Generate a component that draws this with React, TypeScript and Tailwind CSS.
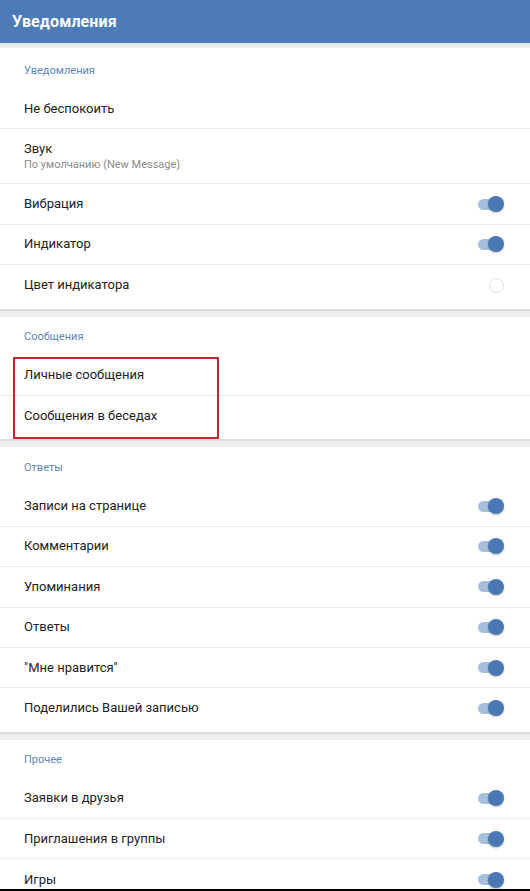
import React from "react";

type Row = { title: string; sub?: string; control?: "toggle" | "radio" | "none" };

const Toggle = () => (
  <div className="relative w-[26px] h-[16px] flex items-center">
    <div className="w-[22px] h-[11px] rounded-full bg-[#a7bedd]" />
    <div className="absolute right-0 top-0 w-[16px] h-[16px] rounded-full bg-[#4a78b5] shadow-[0_1px_2px_rgba(0,0,0,0.25)]" />
  </div>
);

const Radio = () => (
  <div className="w-[15px] h-[15px] rounded-full border border-[#dcdcdc] bg-white" />
);

const SettingRow = ({ row, last }: { row: Row; last: boolean }) => (
  <div
    className={`flex items-center justify-between pl-6 pr-[26px] ${row.sub ? "h-[55px]" : "h-[40.4px]"} ${last ? "" : "border-b border-[#ebebeb]"}`}
  >
    <div className="flex flex-col">
      <span className="text-[13px] leading-[16px] text-[#222]">{row.title}</span>
      {row.sub && <span className="text-[11px] leading-[14px] text-[#8a8a8a] mt-[1px]">{row.sub}</span>}
    </div>
    {row.control === "toggle" && <Toggle />}
    {row.control === "radio" && <Radio />}
  </div>
);

const Section = ({
  title,
  rows,
  highlight,
  first,
}: {
  title: string;
  rows: Row[];
  highlight?: boolean;
  first?: boolean;
}) => (
  <div className={`bg-white pb-[3px] shrink-0 ${first ? "pt-[2px]" : ""}`}>
    <div className="h-[39px] pt-[3px] flex items-center pl-6 text-[11px] text-[#5f86b8]">{title}</div>
    <div className="relative">
      {rows.map((r, i) => (
        <SettingRow key={r.title} row={r} last={i === rows.length - 1} />
      ))}
      {highlight && (
        <div className="absolute left-[13px] top-[1px] w-[206px] h-[82px] border-2 border-[#c9232b]" />
      )}
    </div>
  </div>
);

const Band = () => (
  <div className="h-[8px] shrink-0 bg-[#eceef0] border-t-2 border-[#dadcdf]" />
);

const App = () => {
  return (
    <div className="w-[530px] h-[891px] overflow-hidden bg-[#eceef0] border-b-2 border-black font-['Roboto','Noto_Sans',sans-serif] flex flex-col">
      <div className="h-[43px] bg-[#4d7bb7] flex items-center px-3 shrink-0">
        <h1 className="text-white text-[16px] font-bold tracking-[0.1px]">Уведомления</h1>
      </div>
      <div className="h-[5px] bg-gradient-to-b from-[#dfe2e6] to-[#eef0f2] shrink-0" />
      <Section
        first
        title="Уведомления"
        rows={[
          { title: "Не беспокоить" },
          { title: "Звук", sub: "По умолчанию (New Message)" },
          { title: "Вибрация", control: "toggle" },
          { title: "Индикатор", control: "toggle" },
          { title: "Цвет индикатора", control: "radio" },
        ]}
      />
      <Band />
      <Section
        title="Сообщения"
        highlight
        rows={[{ title: "Личные сообщения" }, { title: "Сообщения в беседах" }]}
      />
      <Band />
      <Section
        title="Ответы"
        rows={[
          { title: "Записи на странице", control: "toggle" },
          { title: "Комментарии", control: "toggle" },
          { title: "Упоминания", control: "toggle" },
          { title: "Ответы", control: "toggle" },
          { title: "\"Мне нравится\"", control: "toggle" },
          { title: "Поделились Вашей записью", control: "toggle" },
        ]}
      />
      <Band />
      <Section
        title="Прочее"
        rows={[
          { title: "Заявки в друзья", control: "toggle" },
          { title: "Приглашения в группы", control: "toggle" },
          { title: "Игры", control: "toggle" },
        ]}
      />
    </div>
  );
};

export default App;
